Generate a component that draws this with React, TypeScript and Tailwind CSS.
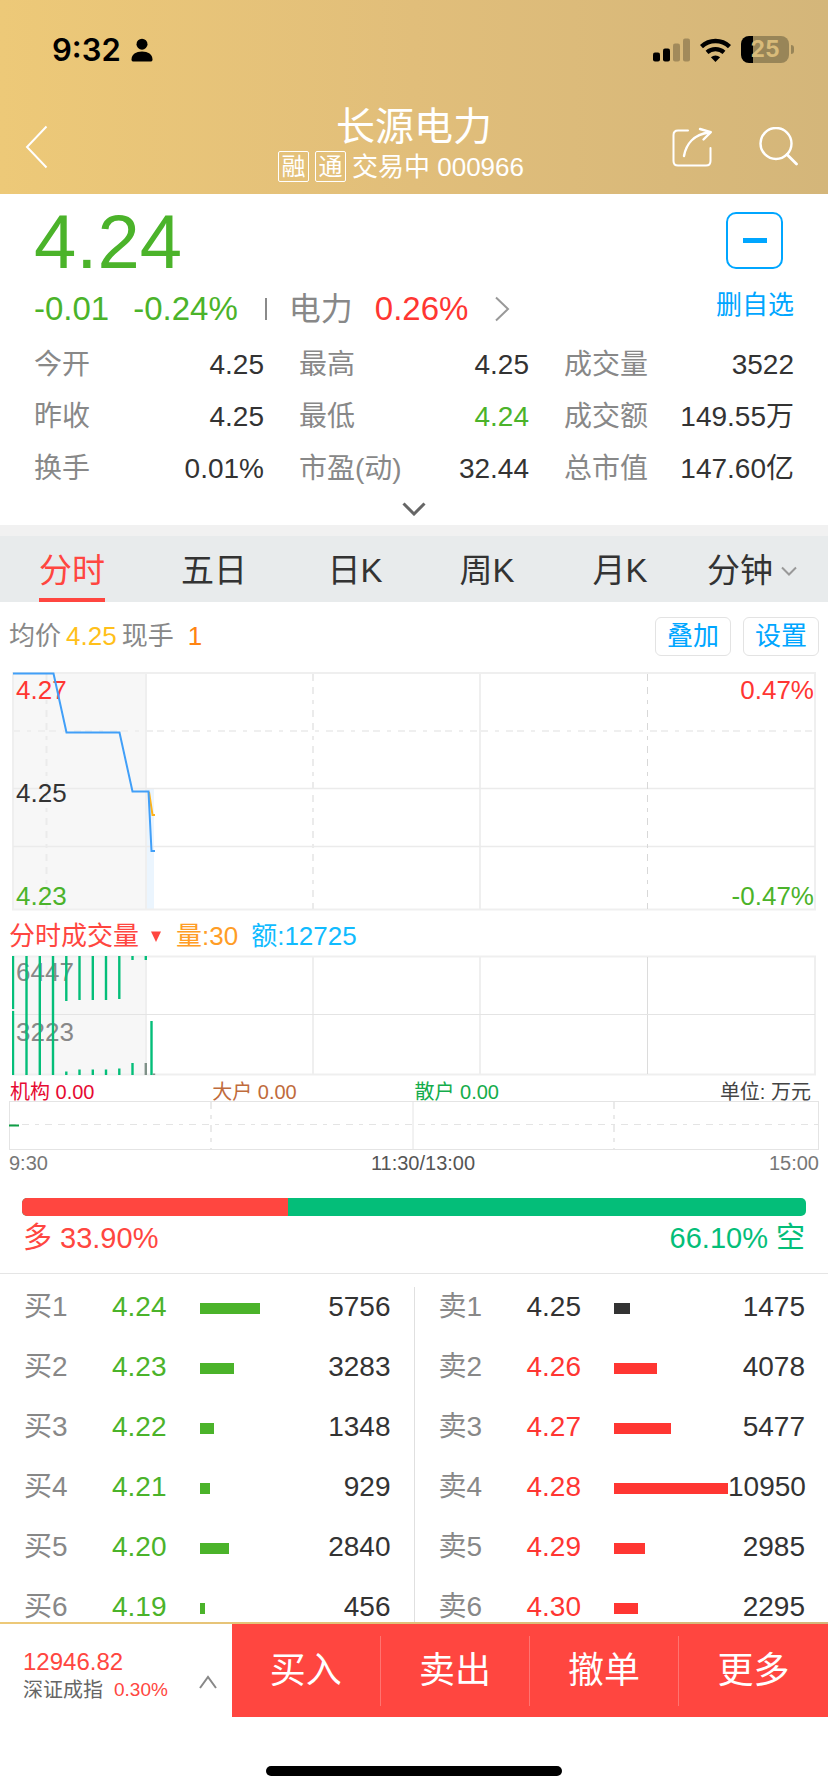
import React from "react";

const GREEN = "text-[#4bb32a]";
const RED = "text-[#ff3632]";
const DARK = "text-[#333333]";

type Stat = { label: string; value: string; tone: string };

const stats: Stat[] = [
  { label: "今开", value: "4.25", tone: DARK },
  { label: "最高", value: "4.25", tone: DARK },
  { label: "成交量", value: "3522", tone: DARK },
  { label: "昨收", value: "4.25", tone: DARK },
  { label: "最低", value: "4.24", tone: GREEN },
  { label: "成交额", value: "149.55万", tone: DARK },
  { label: "换手", value: "0.01%", tone: DARK },
  { label: "市盈(动)", value: "32.44", tone: DARK },
  { label: "总市值", value: "147.60亿", tone: DARK },
];

type Order = { label: string; price: string; volume: number; tone: string; bar: string };

const bids: Order[] = [
  { label: "买1", price: "4.24", volume: 5756, tone: GREEN, bar: "bg-[#4bb32a]" },
  { label: "买2", price: "4.23", volume: 3283, tone: GREEN, bar: "bg-[#4bb32a]" },
  { label: "买3", price: "4.22", volume: 1348, tone: GREEN, bar: "bg-[#4bb32a]" },
  { label: "买4", price: "4.21", volume: 929, tone: GREEN, bar: "bg-[#4bb32a]" },
  { label: "买5", price: "4.20", volume: 2840, tone: GREEN, bar: "bg-[#4bb32a]" },
  { label: "买6", price: "4.19", volume: 456, tone: GREEN, bar: "bg-[#4bb32a]" },
];

const asks: Order[] = [
  { label: "卖1", price: "4.25", volume: 1475, tone: DARK, bar: "bg-[#333333]" },
  { label: "卖2", price: "4.26", volume: 4078, tone: RED, bar: "bg-[#ff3632]" },
  { label: "卖3", price: "4.27", volume: 5477, tone: RED, bar: "bg-[#ff3632]" },
  { label: "卖4", price: "4.28", volume: 10950, tone: RED, bar: "bg-[#ff3632]" },
  { label: "卖5", price: "4.29", volume: 2985, tone: RED, bar: "bg-[#ff3632]" },
  { label: "卖6", price: "4.30", volume: 2295, tone: RED, bar: "bg-[#ff3632]" },
];

const maxVolume = Math.max(...bids.concat(asks).map((o) => o.volume));

function StatusBar() {
  return (
    <div className="flex h-[99px] items-center justify-between pr-[34px] pl-[52px] text-black">
      <div className="flex items-center gap-[10px]">
        <span className="font-['Inter',sans-serif] text-[31px] leading-[40px] font-semibold">9:32</span>
        <svg className="h-[24px] w-[22px]" viewBox="0 0 22 24" fill="currentColor">
          <circle cx="11" cy="6.2" r="5.5" />
          <path d="M0.5 21.5C0.5 16.5 5 13.6 11 13.6s10.500 2.900 10.500 7.900c0 1.400-.8 2-2 2H2.500c-1.200 0-2-.6-2-2z" />
        </svg>
      </div>
      <div className="flex items-center gap-[10px]">
        <svg className="h-[24px] w-[37px]" viewBox="0 0 37 24">
          <rect x="0" y="14.500" width="7" height="9" rx="2" />
          <rect x="10" y="10.500" width="7" height="13" rx="2" />
          <rect x="20" y="5.500" width="7" height="18" rx="2" opacity=".25" />
          <rect x="30" y="0.500" width="7" height="23" rx="2" opacity=".25" />
        </svg>
        <svg className="h-[24px] w-[31px]" viewBox="0 0 31 24" fill="none" stroke="currentColor">
          <path d="M1.500 8.600a20.500 20.500 0 0 1 28 0" strokeWidth="4.400" />
          <path d="M7 14.400a12.800 12.800 0 0 1 17 0" strokeWidth="4.200" />
          <path d="M15.500 24l-4.600-4.800a7 7 0 0 1 9.200 0z" fill="currentColor" stroke="none" />
        </svg>
        <div className="flex items-center gap-[2px]">
          <div className="flex h-[27px] w-[48px] items-center justify-center rounded-[8px] bg-[linear-gradient(90deg,#000_0_25%,#988558_25%_100%)]">
            <span className="font-['Inter',sans-serif] text-[23px] leading-[27px] font-bold text-[#d9bb7a]">25</span>
          </div>
          <div className="h-[9px] w-[3px] rounded-r-full bg-[#988558]" />
        </div>
      </div>
    </div>
  );
}

function Header() {
  return (
    <header className="shrink-0 bg-[linear-gradient(90deg,#edc978_0%,#e1be7a_50%,#d4b67a_100%)]">
      <StatusBar />
      <div className="grid h-[95px] grid-cols-[1fr_auto_1fr] items-center px-[25px] text-white">
        <button type="button" aria-label="返回" className="justify-self-start">
          <svg className="h-[44px] w-[24px]" viewBox="0 0 24 44" fill="none" stroke="currentColor" strokeWidth="2">
            <path d="M21.500 1.500L2 22l19.500 20.500" />
          </svg>
        </button>
        <div className="flex flex-col items-center pb-[4px]">
          <h1 className="text-[39px] leading-[44px]">长源电力</h1>
          <div className="flex items-center gap-[6px] pr-[26px] text-[26px] leading-[36px]">
            <span className="flex size-[31px] items-center justify-center rounded-[2px] border border-white text-[24px]">融</span>
            <span className="flex size-[31px] items-center justify-center rounded-[2px] border border-white text-[24px]">通</span>
            <span className="whitespace-nowrap">交易中 000966</span>
          </div>
        </div>
        <div className="flex items-center gap-[45px] justify-self-end pr-[5px]">
          <button type="button" aria-label="分享">
            <svg className="h-[40px] w-[42px]" viewBox="0 0 42 40" fill="none" stroke="currentColor" strokeWidth="2" strokeLinecap="round" strokeLinejoin="round">
              <path d="M17 3.500H7Q2.500 3.500 2.500 8V34Q2.500 38.500 7 38.500H35Q39.500 38.500 39.500 34V21" />
              <path d="M13 29C15 17 23 7.500 38 5.500" strokeWidth="2.400" />
              <path d="M29 2L39.800 5.200L32.500 12.500" strokeWidth="2.400" />
            </svg>
          </button>
          <button type="button" aria-label="搜索">
            <svg className="size-[40px]" viewBox="0 0 40 40" fill="none" stroke="currentColor" strokeWidth="2.400" strokeLinecap="round">
              <circle cx="18" cy="16.500" r="15.500" />
              <path d="M29 27.500L38.500 37" strokeWidth="2.800" />
            </svg>
          </button>
        </div>
      </div>
    </header>
  );
}

function Quote() {
  return (
    <section className="px-[34px] pt-[18px]">
      <div className="flex justify-between">
        <div>
          <div className={`text-[76px] leading-[60px] ${GREEN}`}>4.24</div>
          <div className="mt-[17px] flex items-center text-[33px] leading-[40px]">
            <span className={GREEN}>-0.01</span>
            <span className={`ml-[24px] ${GREEN}`}>-0.24%</span>
            <span className="mr-[22px] ml-[27px] h-[22px] w-[2px] bg-[#8a8a8a]" />
            <span className="text-[32px] text-[#888888]">电力</span>
            <span className={`ml-[22px] ${RED}`}>0.26%</span>
            <button type="button" aria-label="电力板块" className="ml-[26px]">
              <svg className="h-[26px] w-[16px]" viewBox="0 0 16 26" fill="none" stroke="#999999" strokeWidth="2">
                <path d="M2 1.500L14 13L2 24.500" />
              </svg>
            </button>
          </div>
        </div>
        <button type="button" className="flex flex-col items-center text-[#00a6ff]">
          <span className="flex size-[57px] items-center justify-center rounded-[10px] border-2 border-[#00a6ff]">
            <span className="h-[5px] w-[24px] bg-[#00a6ff]" />
          </span>
          <span className="mt-[18px] text-[26px] leading-[36px]">删自选</span>
        </button>
      </div>
      <dl className="mt-[10px] grid grid-cols-3 gap-x-[35px]">
        {stats.map((s) => (
          <div key={s.label} className="flex h-[52px] items-center justify-between text-[28px] leading-[40px] whitespace-nowrap">
            <dt className="text-[#888888]">{s.label}</dt>
            <dd className={s.tone}>{s.value}</dd>
          </div>
        ))}
      </dl>
      <button type="button" aria-label="展开" className="flex h-[30px] w-full items-center justify-center pb-[2px]">
        <svg className="h-[14px] w-[24px]" viewBox="0 0 24 14" fill="none" stroke="#666666" strokeWidth="3">
          <path d="M1.500 1.500L12 12L22.500 1.500" />
        </svg>
      </button>
    </section>
  );
}

const tabs = ["分时", "五日", "日K", "周K", "月K", "分钟"];

function Tabs() {
  return (
    <nav className="grid h-[77px] grid-cols-[144fr_140fr_142fr_122fr_144fr_120fr] border-t-[11px] border-[#f1f1f1] bg-[#e8ebec] pr-[16px] text-[33px] leading-[54px]">
      {tabs.map((t, i) => (
        <button
          key={t}
          type="button"
          className={
            i === 0
              ? "h-[66px] justify-self-center border-b-4 border-[#ff4640] pt-[8px] text-[#ff4640]"
              : "flex h-[66px] items-center justify-center gap-[8px] pt-[4px] text-[#333333]"
          }
        >
          {t}
          {i === 5 && (
            <svg className="h-[10px] w-[16px]" viewBox="0 0 16 10" fill="none" stroke="#999999" strokeWidth="2">
              <path d="M1 1.500L8 8.500L15 1.500" />
            </svg>
          )}
        </button>
      ))}
    </nav>
  );
}

function PriceChart() {
  return (
    <div className="relative mx-[12px] text-[26px] leading-[30px]">
      <svg className="block h-[241px] w-full" viewBox="0 0 804 241" preserveAspectRatio="none" fill="none">
        <rect x="1" y="3" width="133" height="236" fill="#f7f7f7" />
        <rect x="134" y="119" width="8" height="120" fill="#ebf5fe" />
        <g stroke="#efefef" strokeWidth="2">
          <rect x="1" y="3" width="802" height="236.500" />
          <path d="M134 3V239M468 3V239" />
          <path d="M1 118.500H803M1 176.500H803" strokeWidth="1.500" stroke="#ebebeb" />
          <path d="M1 61H803" strokeDasharray="7 7 4 7 7 4" />
          <path d="M34.500 4V239M301 4V239" strokeDasharray="7 6 7 6 4 6" stroke="#ebebeb" />
          <path d="M635.500 4V239" strokeDasharray="7 6 7 6 4 6" strokeWidth="1" stroke="#d8d8d8" />
        </g>
      </svg>
      <span className="absolute top-[5px] left-[4px] text-[#ff3632]">4.27</span>
      <span className="absolute top-[108px] left-[4px] text-[#333333]">4.25</span>
      <span className="absolute top-[211px] left-[4px] text-[#4bb32a]">4.23</span>
      <span className="absolute top-[5px] right-[2px] text-[#ff3632]">0.47%</span>
      <span className="absolute top-[211px] right-[2px] text-[#4bb32a]">-0.47%</span>
      <svg className="absolute inset-0 h-[241px] w-full" viewBox="0 0 804 241" preserveAspectRatio="none" fill="none" strokeWidth="2">
        <path d="M137 122L140.500 145H143" stroke="#ffb31a" />
        <path d="M1 3.500H41.500L54.500 62.500H107.500L120.500 121.500H136.500L139.500 181H143" stroke="#419ff8" />
      </svg>
    </div>
  );
}

const volumeBars: [number, number, number][] = [
  [1, 1, 54],
  [1, 56, 120],
  [14.5, 1, 120],
  [27.8, 1, 120],
  [41, 1, 120],
  [54.3, 1, 46],
  [54.3, 116.500, 120],
  [67.5, 1, 45],
  [67.5, 114.500, 120],
  [80.8, 1, 45],
  [80.8, 114.500, 120],
  [94, 1, 45],
  [94, 114.500, 120],
  [107.3, 1, 44],
  [107.3, 113.500, 120],
  [120.5, 1, 5],
  [120.5, 108, 120],
  [133.8, 1, 5],
  [139.5, 66, 120],
];

function VolumeChart() {
  return (
    <div className="relative mx-[12px] text-[26px] leading-[30px] text-[#888888]">
      <svg className="block h-[121px] w-full" viewBox="0 0 804 121" preserveAspectRatio="none" fill="none">
        <rect x="1" y="1.500" width="133" height="118" fill="#f7f7f7" />
        <g stroke="#efefef" strokeWidth="2">
          <rect x="1" y="1.500" width="802" height="118" />
          <path d="M134 2V119M301 2V119M468 2V119" />
          <path d="M635.500 2V119" strokeWidth="1" stroke="#dcdcdc" />
          <path d="M1 59.500H803" strokeWidth="1" stroke="#e4e4e4" />
        </g>
      </svg>
      <span className="absolute top-[2px] left-[4px]">6447</span>
      <span className="absolute top-[62px] left-[4px]">3223</span>
      <svg className="absolute inset-0 h-[121px] w-full" viewBox="0 0 804 121" preserveAspectRatio="none" stroke="#04be79" strokeWidth="2.400">
        {volumeBars.map(([x, y1, y2]) => (
          <line key={`${x}-${y1}`} x1={x} x2={x} y1={y1} y2={y2} />
        ))}
        <path d="M133.800 108V120M142 118.500V120" stroke="#7f9188" />
      </svg>
    </div>
  );
}

function FundFlow() {
  return (
    <div className="px-[9px] text-[20px]">
      <div className="grid h-[24px] grid-cols-4 items-end pl-px leading-[16px] whitespace-nowrap">
        <span className="text-[#e60a32]">机构 0.00</span>
        <span className="text-[#bf6b3c]">大户 0.00</span>
        <span className="text-[#14ac4b]">散户 0.00</span>
        <span className="pr-[8px] text-right text-[#444444]">单位: 万元</span>
      </div>
      <svg className="block h-[50px] w-full" viewBox="0 0 810 50" preserveAspectRatio="none" fill="none" stroke="#e4e4e4">
        <rect x="0.500" y="1.500" width="809" height="48" />
        <path d="M404 1V49" />
        <path d="M0 24.500H810" strokeDasharray="7 6 7 6 4 6" />
        <path d="M202 2V49M605 2V49" strokeDasharray="7 6 4 6" strokeWidth="1.500" />
        <path d="M0 25.500H10" stroke="#0f9f46" strokeWidth="2" />
      </svg>
      <div className="grid h-[26px] grid-cols-[1fr_auto_1fr] items-center leading-[24px] text-[#777777]">
        <span>9:30</span>
        <span className="pl-[18px] text-[#555555]">11:30/13:00</span>
        <span className="text-right">15:00</span>
      </div>
    </div>
  );
}

function Sentiment() {
  return (
    <section className="border-b border-[#e5e5e5] px-[22px] pt-[22px] pb-[13px]">
      <div className="flex h-[18px] overflow-hidden rounded-[5px] bg-[#04be79]">
        <div className="w-[33.9%] bg-[#ff4640]" />
      </div>
      <div className="flex h-[44px] items-center justify-between px-px text-[29px] leading-[40px]">
        <span className="text-[#ff4640]">多 33.90%</span>
        <span className="text-[#04be79]">66.10% 空</span>
      </div>
    </section>
  );
}

function OrderTable({ name, orders }: { name: string; orders: Order[] }) {
  return (
    <div className="pt-[3px] pr-[23px] pl-[24px]">
      <table aria-label={name} className="w-full table-fixed text-[28px] leading-[40px] whitespace-nowrap">
        <tbody>
          {orders.map((o) => (
            <tr key={o.label} className="h-[60px]">
              <th scope="row" className="w-[24%] p-0 text-left font-normal text-[#888888]">{o.label}</th>
              <td className={`w-[24%] p-0 ${o.tone}`}>{o.price}</td>
              <td className="w-[31%] p-0 pt-[3px]">
                <div className={`h-[11px] ${o.bar}`} style={{ width: `${(o.volume / maxVolume) * 100}%` }} />
              </td>
              <td className="p-0 text-right text-[#333333]">{o.volume}</td>
            </tr>
          ))}
        </tbody>
      </table>
    </div>
  );
}

const actions = ["买入", "卖出", "撤单", "更多"];

function Footer() {
  return (
    <footer className="shrink-0 bg-white">
      <div className="h-[2px] bg-[linear-gradient(90deg,#edc978,#d4b67a)]" />
      <div className="flex h-[93px]">
        <button type="button" className="flex w-[28%] items-end justify-between pr-[15px] pb-[13px] pl-[23px] text-left whitespace-nowrap">
          <span className="flex flex-col">
            <span className="text-[24px] leading-[28px] text-[#ff4640]">12946.82</span>
            <span className="flex items-center gap-[11px] leading-[28px]">
              <span className="text-[20px] text-[#666666]">深证成指</span>
              <span className="text-[19px] text-[#ff4640]">0.30%</span>
            </span>
          </span>
          <svg className="mb-[15px] h-[14px] w-[18px]" viewBox="0 0 18 14" fill="none" stroke="#888888" strokeWidth="2">
            <path d="M1 13L9 2L17 13" />
          </svg>
        </button>
        <div className="grid flex-1 grid-cols-4 items-center bg-[#ff4640] text-[36px] leading-[70px] text-white">
          {actions.map((a) => (
            <button key={a} type="button" className="h-[70px] border-r border-white/25 last:border-r-0">
              {a}
            </button>
          ))}
        </div>
      </div>
      <div className="flex h-[75px] items-end justify-center pb-[16px]">
        <div className="h-[10px] w-[296px] rounded-full bg-black" />
      </div>
    </footer>
  );
}

export default function App() {
  return (
    <div className="flex h-screen flex-col bg-white font-['Liberation_Sans','Noto_Sans_CJK_SC',sans-serif]">
      <Header />
      <main className="min-h-0 flex-1 overflow-y-auto [scrollbar-width:none]">
        <Quote />
        <Tabs />
        <div className="flex h-[68px] items-center pr-[9px] pl-[9px] text-[26px] leading-[36px]">
          <span className="text-[#888888]">均价</span>
          <span className="ml-[5px] text-[#ffc01a]">4.25</span>
          <span className="ml-[5px] text-[#888888]">现手</span>
          <span className="ml-[14px] text-[#ff8412]">1</span>
          <div className="ml-auto flex gap-[12px] text-[#00a6ff]">
            <button type="button" className="h-[39px] w-[76px] rounded-[6px] border border-[#e3e3e3]">叠加</button>
            <button type="button" className="h-[39px] w-[76px] rounded-[6px] border border-[#e3e3e3]">设置</button>
          </div>
        </div>
        <PriceChart />
        <div className="flex h-[44px] items-center pt-[6px] pl-[9px] text-[26px] leading-[36px]">
          <button type="button" className="flex items-center gap-[12px] text-[#ff4640]">
            分时成交量
            <svg className="h-[11px] w-[10px]" viewBox="0 0 10 11" fill="currentColor">
              <path d="M0 0.500H10L5 11z" />
            </svg>
          </button>
          <span className="ml-[15px] text-[#ff9d26]">量:30</span>
          <span className="ml-[13px] text-[#10bbff]">额:12725</span>
        </div>
        <VolumeChart />
        <FundFlow />
        <Sentiment />
        <section className="grid grid-cols-[1fr_1px_1fr]">
          <OrderTable name="买盘" orders={bids} />
          <div className="mt-[13px] bg-[#e0e0e0]" />
          <OrderTable name="卖盘" orders={asks} />
        </section>
      </main>
      <Footer />
    </div>
  );
}
